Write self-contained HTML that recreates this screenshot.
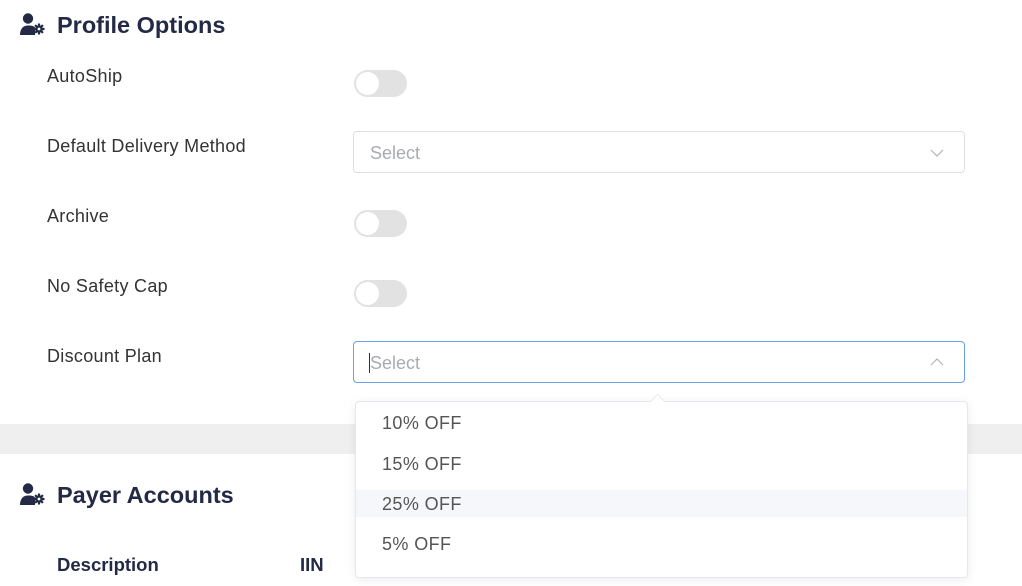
<!DOCTYPE html>
<html><head><style>
*{box-sizing:border-box;margin:0;padding:0}
body{width:1022px;height:586px;overflow:hidden;background:#fff;font-family:"Liberation Sans",sans-serif;position:relative}
.abs{position:absolute}
h2{position:absolute;font-size:23.5px;font-weight:bold;color:#232a45;left:57px}
.lbl{position:absolute;left:47px;font-size:18px;letter-spacing:.3px;color:#333}
.tog{position:absolute;left:354px;width:53px;height:27px;border-radius:14px;background:#e2e2e2}
.tog::after{content:"";position:absolute;left:2px;top:2px;width:23px;height:23px;border-radius:50%;background:#fff}
.sel{position:absolute;left:353px;width:612px;height:42px;border:1px solid #dcdfe6;border-radius:4px;font-size:18px;color:#a8abb2;padding:11px 0 0 16px}
.item{position:absolute;left:26px;font-size:18px;letter-spacing:.4px;color:#555}
</style></head><body>
<svg class="abs" style="left:20px;top:13px" width="25" height="23" viewBox="0 0 25 23"><circle cx="8" cy="5.5" r="5.2" fill="#232a45"/><path d="M0 22c0-6 3-9.5 8-9.5s6 1 7 2v7.5z" fill="#232a45"/><g stroke="#232a45" stroke-width="2.2"><path d="M19 10.5v11M13.5 16h11M15.1 12.1l7.8 7.8M22.9 12.1l-7.8 7.8"/></g><circle cx="19" cy="16" r="3.8" fill="#232a45"/><circle cx="19" cy="16" r="1.4" fill="#fff"/></svg>
<h2 style="top:12px">Profile Options</h2>
<div class="lbl" style="top:66px">AutoShip</div>
<div class="tog" style="top:70px"></div>
<div class="lbl" style="top:136px">Default Delivery Method</div>
<div class="sel" style="top:131px">Select<svg class="abs" style="right:20px;top:17px" width="14" height="8"><path d="M1 1l6 6 6-6" fill="none" stroke="#b0b3b8" stroke-width="1.2"/></svg></div>
<div class="lbl" style="top:206px">Archive</div>
<div class="tog" style="top:210px"></div>
<div class="lbl" style="top:276px">No Safety Cap</div>
<div class="tog" style="top:280px"></div>
<div class="lbl" style="top:346px">Discount Plan</div>
<div class="sel" style="top:341px;border-color:#6aa0e8"><span style="position:absolute;left:15px;top:11px;width:1px;height:20px;background:#333"></span>Select<svg class="abs" style="right:20px;top:16px" width="14" height="8"><path d="M1 7l6-6 6 6" fill="none" stroke="#b0b3b8" stroke-width="1.2"/></svg></div>
<div class="abs" style="left:0;top:424px;width:1022px;height:30px;background:#efefef"></div>
<svg class="abs" style="left:20px;top:483px" width="25" height="23" viewBox="0 0 25 23"><circle cx="8" cy="5.5" r="5.2" fill="#232a45"/><path d="M0 22c0-6 3-9.5 8-9.5s6 1 7 2v7.5z" fill="#232a45"/><g stroke="#232a45" stroke-width="2.2"><path d="M19 10.5v11M13.5 16h11M15.1 12.1l7.8 7.8M22.9 12.1l-7.8 7.8"/></g><circle cx="19" cy="16" r="3.8" fill="#232a45"/><circle cx="19" cy="16" r="1.4" fill="#fff"/></svg>
<h2 style="top:482px">Payer Accounts</h2>
<div class="abs" style="left:57px;top:554px;font-size:18.5px;font-weight:bold;color:#232a45">Description</div>
<div class="abs" style="left:300px;top:554px;font-size:18.5px;font-weight:bold;color:#232a45">IIN</div>
<div class="abs" style="left:355px;top:401px;width:613px;height:177px;background:#fff;border:1px solid #e4e7ed;border-radius:4px;box-shadow:0 2px 10px rgba(0,0,0,.08)">
<div class="abs" style="left:0;top:88px;width:611px;height:27px;background:#f5f7fa"></div>
<div class="item" style="top:11px">10% OFF</div>
<div class="item" style="top:52px">15% OFF</div>
<div class="item" style="top:92px">25% OFF</div>
<div class="item" style="top:132px">5% OFF</div>
</div>
<div class="abs" style="left:652px;top:396px;width:11px;height:11px;background:#fff;border-left:1px solid #e4e7ed;border-top:1px solid #e4e7ed;transform:rotate(45deg)"></div>
</body></html>
